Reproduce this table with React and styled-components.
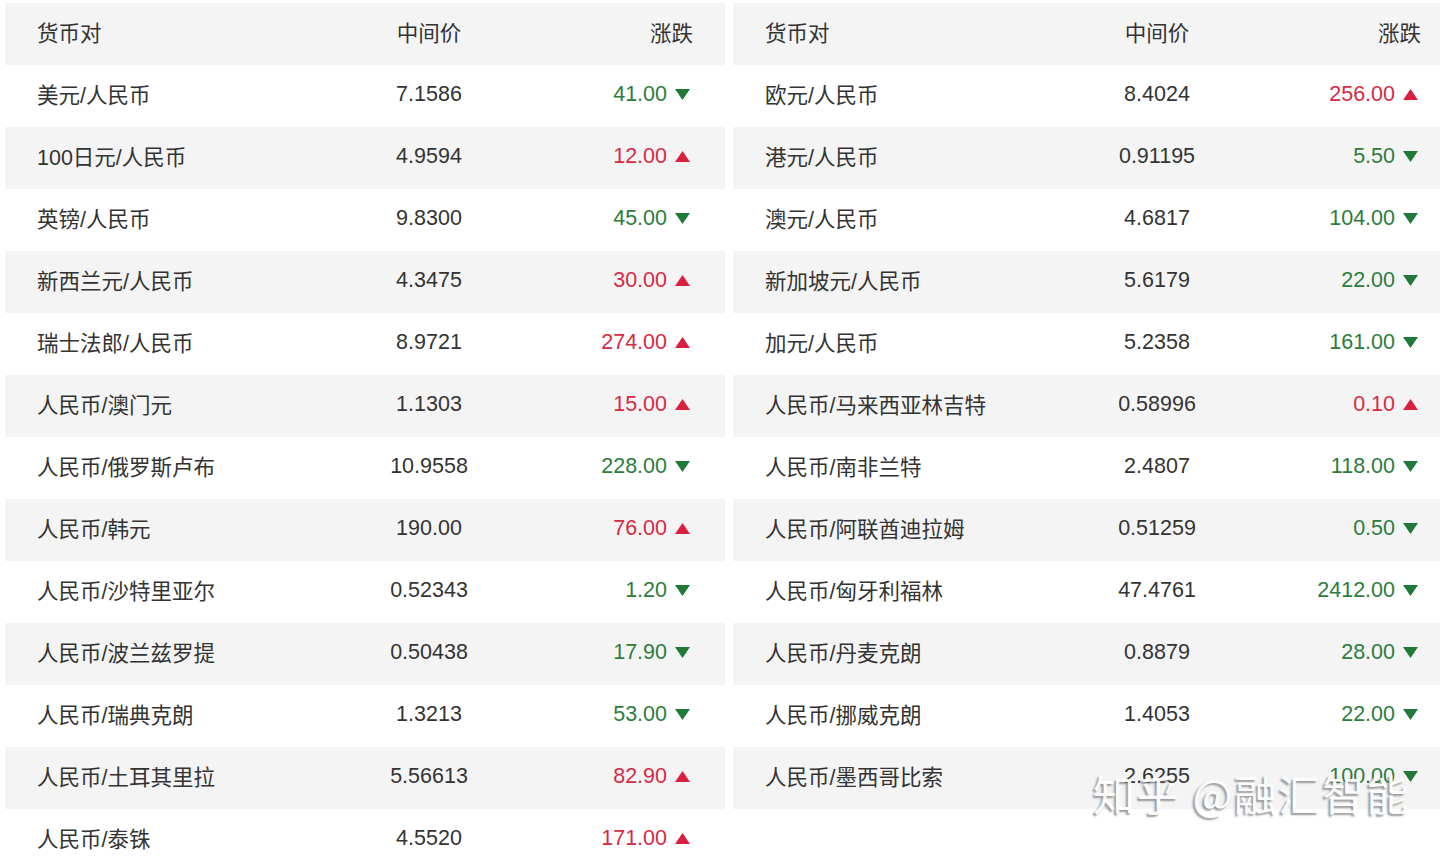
import React from "react";
import styled, { createGlobalStyle } from "styled-components";

const GlobalStyle = createGlobalStyle`
  html, body {
    margin: 0;
    padding: 0;
    background: #fff;
    overflow: hidden;
  }
  body {
    font-family: "Liberation Sans", Arial, "Noto Sans CJK SC", sans-serif;
    color: #333;
  }
`;

const Page = styled.div`
  position: relative;
  width: 1440px;
  height: 856px;
  overflow: hidden;
  display: flex;
  gap: 8px;
  padding: 3px 0 0 5px;
  box-sizing: border-box;
`;

const Table = styled.div`
  flex: 0 0 720px;
  display: flex;
  flex-direction: column;
`;

const Row = styled.div`
  display: grid;
  grid-template-columns: 32px 280px 224px 1fr 32px;
  align-items: center;
  height: 62px;
  flex: 0 0 62px;
  box-sizing: border-box;
  padding-bottom: 3px;
  background: ${(p) => (p.$shaded ? "#f4f4f4" : "#fff")};
  font-size: 21.5px;
`;

const Name = styled.div`
  grid-column: 2;
  white-space: nowrap;
  color: #333;
  padding-bottom: 3px;
`;

const Mid = styled.div`
  grid-column: 3;
  text-align: center;
  color: #333;
`;

const Change = styled.div`
  grid-column: 4;
  display: flex;
  justify-content: flex-end;
  align-items: center;
  gap: 8px;
  color: ${(p) => (p.$up ? "#d72a45" : "#2c7d3c")};
`;

const HeadCell = styled.div`
  grid-column: ${(p) => p.$col};
  text-align: ${(p) => p.$align || "left"};
  color: #333;
  padding-bottom: 3px;
`;

const Arrow = styled.svg`
  width: 15px;
  height: 11px;
  flex: 0 0 15px;
  margin-right: 3px;
`;

const Watermark = styled.div`
  position: absolute;
  left: 1093px;
  top: 762px;
  font-family: "Noto Sans CJK SC", sans-serif;
  font-size: 42px;
  letter-spacing: 2px;
  color: rgba(255, 255, 255, 0.94);
  text-shadow: -2px 2px 2px rgba(110, 110, 110, 0.7);
  white-space: nowrap;
`;

const left = [
  ["美元/人民币", "7.1586", "41.00", false],
  ["100日元/人民币", "4.9594", "12.00", true],
  ["英镑/人民币", "9.8300", "45.00", false],
  ["新西兰元/人民币", "4.3475", "30.00", true],
  ["瑞士法郎/人民币", "8.9721", "274.00", true],
  ["人民币/澳门元", "1.1303", "15.00", true],
  ["人民币/俄罗斯卢布", "10.9558", "228.00", false],
  ["人民币/韩元", "190.00", "76.00", true],
  ["人民币/沙特里亚尔", "0.52343", "1.20", false],
  ["人民币/波兰兹罗提", "0.50438", "17.90", false],
  ["人民币/瑞典克朗", "1.3213", "53.00", false],
  ["人民币/土耳其里拉", "5.56613", "82.90", true],
  ["人民币/泰铢", "4.5520", "171.00", true],
];

const right = [
  ["欧元/人民币", "8.4024", "256.00", true],
  ["港元/人民币", "0.91195", "5.50", false],
  ["澳元/人民币", "4.6817", "104.00", false],
  ["新加坡元/人民币", "5.6179", "22.00", false],
  ["加元/人民币", "5.2358", "161.00", false],
  ["人民币/马来西亚林吉特", "0.58996", "0.10", true],
  ["人民币/南非兰特", "2.4807", "118.00", false],
  ["人民币/阿联酋迪拉姆", "0.51259", "0.50", false],
  ["人民币/匈牙利福林", "47.4761", "2412.00", false],
  ["人民币/丹麦克朗", "0.8879", "28.00", false],
  ["人民币/挪威克朗", "1.4053", "22.00", false],
  ["人民币/墨西哥比索", "2.6255", "100.00", false],
];

const Triangle = ({ up }) => (
  <Arrow viewBox="0 0 15 11">
    {up ? (
      <polygon points="7.5,0 15,11 0,11" fill="#d9203f" />
    ) : (
      <polygon points="0,0 15,0 7.5,11" fill="#1f7a38" />
    )}
  </Arrow>
);

const RateTable = ({ rows }) => (
  <Table>
    <Row $shaded>
      <HeadCell $col={2}>货币对</HeadCell>
      <HeadCell $col={3} $align="center">中间价</HeadCell>
      <HeadCell $col={4} $align="right">涨跌</HeadCell>
    </Row>
    {rows.map(([name, mid, chg, up], i) => (
      <Row key={name} $shaded={i % 2 === 1}>
        <Name>{name}</Name>
        <Mid>{mid}</Mid>
        <Change $up={up}>
          {chg}
          <Triangle up={up} />
        </Change>
      </Row>
    ))}
  </Table>
);

export default function App() {
  return (
    <>
      <GlobalStyle />
      <Page>
        <RateTable rows={left} />
        <RateTable rows={right} />
        <Watermark>知乎 @融汇智能</Watermark>
      </Page>
    </>
  );
}
